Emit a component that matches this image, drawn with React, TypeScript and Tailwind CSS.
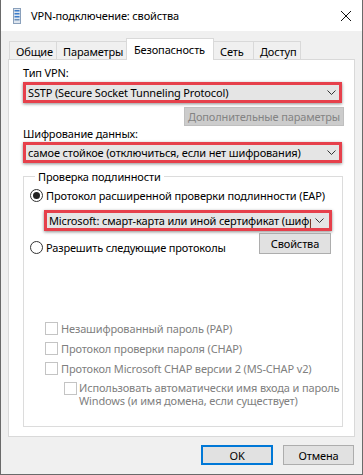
import { ReactNode } from 'react';

const font = { fontFamily: '"Noto Sans", "Open Sans", sans-serif' };

// заголовок окна
function TitleBar() {
  return (
    <div className="h-[31px] bg-white flex items-center shrink-0">
      <svg width="8" height="16" viewBox="0 0 8 16" className="ml-[12px]">
        <rect x="0.5" y="0.5" width="7" height="15" fill="#dfe6ef" stroke="#8aa0bb" />
        <rect x="1.5" y="2" width="5" height="1.5" fill="#3d7cc9" />
        <rect x="1.5" y="5" width="5" height="1.5" fill="#3d7cc9" />
        <rect x="1.5" y="8" width="5" height="1.5" fill="#3d7cc9" />
        <rect x="1.5" y="11" width="5" height="1.5" fill="#6c8fb8" />
      </svg>
      <span className="ml-[10px] text-[11px] leading-[15px] text-black">VPN-подключение: свойства</span>
      <svg width="12" height="12" viewBox="0 0 12 12" className="ml-auto mr-[10px]">
        <path d="M1 1 L11 11 M11 1 L1 11" stroke="#111" strokeWidth="1" />
      </svg>
    </div>
  );
}

const tabs = [
  { label: 'Общие', w: 'w-[48px]' },
  { label: 'Параметры', w: 'w-[71px]' },
  { label: 'Безопасность', w: 'w-[88px]', active: true },
  { label: 'Сеть', w: 'w-[41px]' },
  { label: 'Доступ', w: 'w-[48px]' },
];

function Chevron() {
  return (
    <svg width="9" height="5" viewBox="0 0 9 5" className="shrink-0 ml-[4px]">
      <path d="M0.5 0.5 L4.5 4.5 L8.5 0.5" fill="none" stroke="#333" strokeWidth="1" />
    </svg>
  );
}

// выпадающий список в красной рамке
function Combo({ children, className }: { children: ReactNode; className: string }) {
  return (
    <div
      className={`h-[21px] border-[3px] border-[#e6404b] bg-[#e5e5e5] flex items-center pl-[2px] pr-[3px] shadow-[0_1px_3px_rgba(0,0,0,0.45)] ${className}`}
    >
      <span className="flex-1 overflow-hidden whitespace-nowrap text-black">{children}</span>
      <Chevron />
    </div>
  );
}

function Radio({ checked }: { checked?: boolean }) {
  return (
    <span className="w-[13px] h-[13px] rounded-full border border-[#333] bg-white flex items-center justify-center shrink-0">
      {checked && <span className="w-[7px] h-[7px] rounded-full bg-[#222]" />}
    </span>
  );
}

function Check() {
  return <span className="block w-[13px] h-[13px] border border-[#c4c4c4] bg-white shrink-0" />;
}

function Button({ children, className }: { children: ReactNode; className: string }) {
  return (
    <div className={`flex items-center justify-center bg-[#e1e1e1] border border-[#adadad] text-black ${className}`}>
      {children}
    </div>
  );
}

export default function App() {
  return (
    <div
      style={font}
      className="w-[363px] h-[475px] bg-[#f0f0f0] border-x border-b border-[#6a6a6a] flex flex-col overflow-hidden text-[11px] leading-[15px] tracking-[-0.15px] text-black"
    >
      <TitleBar />

      <div className="pl-[7px] flex flex-col">
        {/* вкладки */}
        <div className="mt-[7px] h-[21px] flex items-end pl-[1px]">
          {tabs.map((t) =>
            t.active ? (
              <div
                key={t.label}
                className={`${t.w} h-[22px] -ml-px -mb-px relative z-10 bg-white border-x border-t border-[#d9d9d9] pt-[3px] pl-[7px]`}
              >
                {t.label}
              </div>
            ) : (
              <div
                key={t.label}
                className={`${t.w} h-[18px] -ml-px first:ml-0 border-x border-t border-[#d9d9d9] pt-[2px] pl-[6px]`}
              >
                {t.label}
              </div>
            ),
          )}
        </div>

        {/* панель вкладки */}
        <div className="w-[347px] h-[378px] bg-white border border-[#d9d9d9] pt-[5px] pl-[14px] pr-[11px] flex flex-col">
          <div>Тип VPN:</div>
          <Combo className="mt-[2px] w-[319px]">SSTP (Secure Socket Tunneling Protocol)</Combo>
          <div className="mt-[4px] self-end -mr-px w-[160px] h-[19px] bg-[#cccccc] border border-[#bfbfbf] flex items-center justify-center text-[#838383]">
            Дополнительные параметры
          </div>
          <div>Шифрование данных:</div>
          <Combo className="mt-[1px] w-[319px]">самое стойкое (отключиться, если нет шифрования)</Combo>

          <fieldset className="mt-[6px] w-[320px] h-[258px] border border-[#dcdcdc] pl-[6px] flex flex-col">
            <legend className="ml-[5px] px-[3px]">Проверка подлинности</legend>
            <div className="mt-[4px] flex items-center gap-[3px]">
              <Radio checked />
              <span>Протокол расширенной проверки подлинности (EAP)</span>
            </div>
            <Combo className="mt-[7px] ml-[14px] w-[288px] !pr-[5px]">
              Microsoft: смарт-карта или иной сертификат (шифрование включено)
            </Combo>
            <div className="mt-[2px] w-[301px] flex items-start justify-between">
              <div className="mt-[7px] flex items-center gap-[3px]">
                <Radio />
                <span>Разрешить следующие протоколы</span>
              </div>
              <Button className="w-[72px] h-[21px]">Свойства</Button>
            </div>

            <div className="mt-[66px] ml-[15px] w-[286px] flex flex-col gap-[5px] text-[#808080] whitespace-nowrap">
              <div className="flex items-center gap-[3px]">
                <Check />
                <span>Незашифрованный пароль (PAP)</span>
              </div>
              <div className="flex items-center gap-[3px]">
                <Check />
                <span>Протокол проверки пароля (CHAP)</span>
              </div>
              <div className="flex items-center gap-[3px]">
                <Check />
                <span>Протокол Microsoft CHAP версии 2 (MS-CHAP v2)</span>
              </div>
              <div className="ml-[19px] flex items-start gap-[2px]">
                <span className="mt-px shrink-0">
                  <Check />
                </span>
                <span className="leading-[13px]">
                  Использовать автоматически имя входа и пароль
                  <br />
                  Windows (и имя домена, если существует)
                </span>
              </div>
            </div>
          </fieldset>
        </div>

        {/* кнопки */}
        <div className="mt-[8px] flex justify-end gap-[10px] pr-[8px]">
          <div className="w-[72px] h-[20px] bg-[#e1e1e1] border-2 border-[#0078d7] flex items-center justify-center">
            OK
          </div>
          <Button className="w-[71px] h-[20px]">Отмена</Button>
        </div>
      </div>
    </div>
  );
}
